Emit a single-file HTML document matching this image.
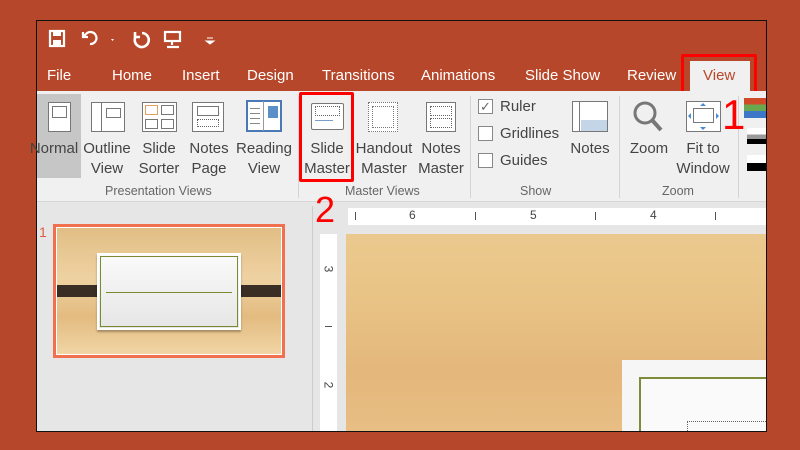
<!DOCTYPE html>
<html><head><meta charset="utf-8"><style>
*{margin:0;padding:0;box-sizing:border-box}
body{width:800px;height:450px;background:#b7472a;position:relative;overflow:hidden;font-family:"Liberation Sans","DejaVu Sans",sans-serif}
.a{position:absolute}
.frame{left:36px;top:20px;width:731px;height:412px;border:1px solid #111;background:#e6e6e6;overflow:hidden}
.t{color:#fff;font-size:15px;top:67px}
.lbl{font-size:15px;color:#444;text-align:center;line-height:20px}
.grp{font-size:12.5px;color:#666;top:184px}
.sep{width:1px;background:#d4d4d4;top:96px;height:102px}
.ico{border:1px solid #777;background:#fff}
.chk{width:15px;height:15px;border:1px solid #888;background:#fff}
.ln{position:absolute;height:1px;background:#888}
</style></head><body>
<div class="a frame"></div>
<div class="a" style="left:37px;top:21px;width:729px;height:70px;background:#b7472a"></div>
<svg class="a" style="left:45px;top:28px" width="180" height="24">
<g fill="none" stroke="#fff" stroke-width="2.2">
<rect x="5" y="3" width="14" height="15"/><rect x="8" y="4" width="8" height="4" fill="#fff" stroke="none"/><rect x="8" y="12" width="8" height="5" fill="#fff" stroke="none"/>
<path d="M45 16a6 6 0 1 0-4-10l-3 3M38 4v5h5"/>
<path d="M97 5a7 7 0 1 1-6 3M90 4v5h5" stroke-width="2.6"/>
<rect x="120" y="4" width="15" height="9"/><path d="M127 13v4M122 19h12"/>
</g>
<path d="M66 11l3 0-1.5 2z" fill="#fff"/>
<path d="M162 10h6M161 13l4 3 4-3z" fill="#fff" stroke="#fff"/>
</svg>
<div class="a t" style="left:47px">File</div>
<div class="a t" style="left:112px">Home</div>
<div class="a t" style="left:182px">Insert</div>
<div class="a t" style="left:247px">Design</div>
<div class="a t" style="left:322px">Transitions</div>
<div class="a t" style="left:421px">Animations</div>
<div class="a t" style="left:525px">Slide Show</div>
<div class="a t" style="left:627px">Review</div>
<div class="a" style="left:690px;top:61px;width:60px;height:31px;background:#f0f0f0"></div>
<div class="a" style="left:703px;top:67px;font-size:15px;color:#b7472a">View</div>
<div class="a" style="left:681px;top:54px;width:76px;height:41px;border:3px solid #f00;border-radius:2px"></div>
<div class="a" style="left:37px;top:91px;width:729px;height:111px;background:#f0f0f0;border-bottom:1px solid #d6d6d6"></div>
<div class="a" style="left:37px;top:94px;width:44px;height:84px;background:#c6c6c6"></div>
<!-- icons -->
<div class="a ico" style="left:48px;top:102px;width:23px;height:30px"></div>
<div class="a ico" style="left:52px;top:106px;width:15px;height:12px"></div>
<div class="a ico" style="left:91px;top:102px;width:34px;height:30px"></div>
<div class="a" style="left:101px;top:102px;width:1px;height:30px;background:#777"></div>
<div class="a ico" style="left:106px;top:108px;width:15px;height:10px"></div>
<div class="a ico" style="left:142px;top:102px;width:35px;height:30px"></div>
<div class="a ico" style="left:145px;top:105px;width:13px;height:10px;border-color:#e0a060"></div>
<div class="a ico" style="left:161px;top:105px;width:13px;height:10px"></div>
<div class="a ico" style="left:145px;top:119px;width:13px;height:10px"></div>
<div class="a ico" style="left:161px;top:119px;width:13px;height:10px"></div>
<div class="a ico" style="left:192px;top:102px;width:32px;height:30px"></div>
<div class="a ico" style="left:197px;top:106px;width:22px;height:10px"></div>
<div class="a" style="left:197px;top:119px;width:22px;height:8px;border:1px dotted #666"></div>
<div class="a" style="left:246px;top:100px;width:36px;height:32px;border:2px solid #4a7ab5;background:#fff"></div>
<div class="a" style="left:263px;top:101px;width:1px;height:30px;background:#999"></div>
<div class="a" style="left:268px;top:106px;width:10px;height:12px;background:#5b8fc8"></div>
<div class="ln" style="left:250px;top:108px;width:10px"></div><div class="ln" style="left:250px;top:113px;width:10px"></div><div class="ln" style="left:250px;top:118px;width:10px"></div><div class="ln" style="left:250px;top:123px;width:10px"></div>
<div class="a" style="left:311px;top:103px;width:33px;height:27px;border:1px solid #777;background:#fff;border-radius:2px"></div>
<div class="a" style="left:315px;top:106px;width:25px;height:10px;border:1px dotted #666"></div>
<div class="ln" style="left:315px;top:120px;width:18px;background:#7a9cc8"></div>
<div class="a ico" style="left:368px;top:102px;width:30px;height:30px;border-style:dotted"></div>
<div class="a" style="left:372px;top:106px;width:22px;height:22px;border:1px dotted #777"></div>
<div class="a ico" style="left:426px;top:102px;width:30px;height:30px"></div>
<div class="a" style="left:430px;top:106px;width:22px;height:10px;border:1px dotted #666"></div>
<div class="a" style="left:430px;top:118px;width:22px;height:10px;border:1px dotted #666"></div>
<div class="a ico" style="left:572px;top:101px;width:36px;height:31px"></div>
<div class="a" style="left:572px;top:101px;width:8px;height:31px;border-right:1px solid #777"></div>
<div class="a" style="left:581px;top:120px;width:26px;height:11px;background:#c5d5e8"></div>
<svg class="a" style="left:630px;top:100px" width="40" height="36"><circle cx="15" cy="13" r="10" fill="none" stroke="#777" stroke-width="3"/><path d="M22 20l9 10" stroke="#777" stroke-width="4"/></svg>
<div class="a ico" style="left:686px;top:101px;width:35px;height:31px"></div>
<div class="a ico" style="left:693px;top:108px;width:21px;height:15px"></div>
<svg class="a" style="left:686px;top:101px" width="35" height="31"><path d="M17 2l-3 3h6zM17 29l-3-3h6zM2 15l3-3v6zM33 15l-3-3v6z" fill="#4a8ad0"/></svg>
<div class="a" style="left:744px;top:98px;width:22px;height:20px;background:linear-gradient(#d04a2a 0 33%,#6aa84f 33% 66%,#3d78c8 66%)"></div>
<div class="a" style="left:747px;top:128px;width:19px;height:16px;background:linear-gradient(#fff 0 40%,#999 40% 70%,#000 70%)"></div>
<div class="a" style="left:747px;top:155px;width:19px;height:16px;background:linear-gradient(#fff 0 50%,#000 50%)"></div>
<div class="a lbl" style="left:28px;top:139px;width:52px">Normal</div>
<div class="a lbl" style="left:80px;top:139px;width:54px">Outline<br>View</div>
<div class="a lbl" style="left:134px;top:139px;width:50px">Slide<br>Sorter</div>
<div class="a lbl" style="left:184px;top:139px;width:50px">Notes<br>Page</div>
<div class="a lbl" style="left:234px;top:139px;width:60px">Reading<br>View</div>
<div class="a lbl" style="left:300px;top:139px;width:54px">Slide<br>Master</div>
<div class="a lbl" style="left:354px;top:139px;width:60px">Handout<br>Master</div>
<div class="a lbl" style="left:414px;top:139px;width:54px">Notes<br>Master</div>
<div class="a lbl" style="left:565px;top:139px;width:50px">Notes</div>
<div class="a lbl" style="left:624px;top:139px;width:50px">Zoom</div>
<div class="a lbl" style="left:672px;top:139px;width:62px">Fit to<br>Window</div>
<div class="a chk" style="left:478px;top:99px;color:#666;font-size:13px;line-height:13px;text-align:center">✓</div>
<div class="a chk" style="left:478px;top:126px"></div>
<div class="a chk" style="left:478px;top:153px"></div>
<div class="a lbl" style="left:500px;top:97px">Ruler</div>
<div class="a lbl" style="left:500px;top:124px">Gridlines</div>
<div class="a lbl" style="left:500px;top:151px">Guides</div>
<div class="a grp" style="left:105px">Presentation Views</div>
<div class="a grp" style="left:345px">Master Views</div>
<div class="a grp" style="left:520px">Show</div>
<div class="a grp" style="left:662px">Zoom</div>
<div class="a sep" style="left:298px"></div><div class="a sep" style="left:470px"></div><div class="a sep" style="left:619px"></div><div class="a sep" style="left:738px"></div>
<div class="a" style="left:299px;top:92px;width:55px;height:90px;border:3px solid #f00;border-radius:2px"></div>
<div class="a" style="left:722px;top:94px;font-size:42px;color:#f00;line-height:42px">1</div>
<div class="a" style="left:315px;top:190px;font-size:36px;color:#f00;line-height:40px">2</div>
<div class="a" style="left:312px;top:206px;width:1px;height:225px;background:#ccc"></div>
<div class="a" style="left:39px;top:224px;font-size:14px;color:#d9603c">1</div>
<div class="a" style="left:53px;top:224px;width:232px;height:134px;border:3px solid #f07050;background:linear-gradient(#e0bd84,#efd2a2 40%,#e3bb80 70%,#f1d6a6);box-shadow:inset 0 0 0 1px #fff"></div>
<div class="a" style="left:57px;top:285px;width:224px;height:12px;background:#3a2e24"></div>
<div class="a" style="left:97px;top:253px;width:144px;height:77px;background:linear-gradient(#fafafa,#e6e6e6);border:2px solid #fff;box-shadow:0 2px 2px rgba(0,0,0,.3)"></div>
<div class="a" style="left:100px;top:256px;width:138px;height:71px;border:1px solid #7a8a30"></div>
<div class="a" style="left:106px;top:292px;width:126px;height:1px;background:#7a8a30"></div>
<div class="a" style="left:348px;top:208px;width:418px;height:17px;background:#fff"></div>
<div class="a" style="left:320px;top:234px;width:17px;height:197px;background:#fff"></div>
<div class="a" style="left:409px;top:208px;font-size:12px;color:#444">6</div>
<div class="a" style="left:530px;top:208px;font-size:12px;color:#444">5</div>
<div class="a" style="left:650px;top:208px;font-size:12px;color:#444">4</div>
<div class="a" style="left:325px;top:262px;font-size:12px;color:#444;transform:rotate(90deg)">3</div>
<div class="a" style="left:325px;top:378px;font-size:12px;color:#444;transform:rotate(90deg)">2</div>
<div class="a" style="left:355px;top:212px;width:1px;height:8px;background:#555"></div>
<div class="a" style="left:475px;top:212px;width:1px;height:8px;background:#555"></div>
<div class="a" style="left:595px;top:212px;width:1px;height:8px;background:#555"></div>
<div class="a" style="left:715px;top:212px;width:1px;height:8px;background:#555"></div>
<div class="a" style="left:325px;top:326px;width:7px;height:1px;background:#555"></div>
<div class="a" style="left:346px;top:234px;width:420px;height:197px;background:linear-gradient(#ebc98e,#e9c487 30%,#e4b77c 70%,#e8be84)"></div>
<div class="a" style="left:622px;top:360px;width:144px;height:71px;background:#f6f6f6"></div>
<div class="a" style="left:639px;top:377px;width:127px;height:54px;border:2px solid #7d8c36;border-right:none;border-bottom:none;background:#fafafa"></div>
<div class="a" style="left:687px;top:421px;width:79px;height:10px;border-top:1px dotted #666;border-left:1px dotted #666"></div>
</body></html>
